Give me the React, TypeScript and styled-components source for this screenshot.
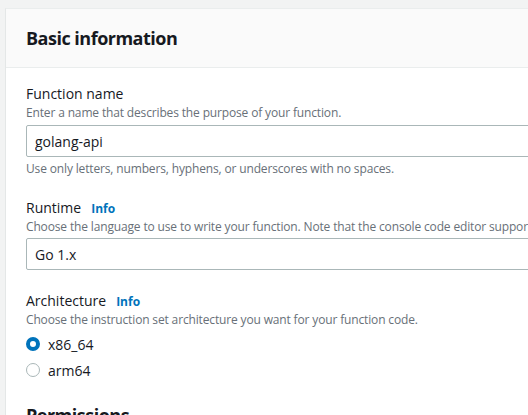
import React from 'react';
import styled, { createGlobalStyle } from 'styled-components';

const GlobalStyle = createGlobalStyle`
  html, body {
    margin: 0;
    padding: 0;
    background: #f2f3f3;
    overflow: hidden;
  }
  body {
    font-family: "Open Sans", "Noto Sans", sans-serif;
    color: #16191f;
  }
`;

const App = () => {
  return (
    <>
      <GlobalStyle />
      <Page>
        <Card>
          <CardHeader>
            <CardTitle>Basic information</CardTitle>
          </CardHeader>
          <CardBody>
            <Field>
              <Label>Function name</Label>
              <Description>Enter a name that describes the purpose of your function.</Description>
              <Input defaultValue="golang-api" />
              <Constraint>Use only letters, numbers, hyphens, or underscores with no spaces.</Constraint>
            </Field>
            <Field>
              <Label>
                Runtime <InfoLink>Info</InfoLink>
              </Label>
              <Description>
                Choose the language to use to write your function. Note that the console code editor supports only Node.js, Python, and Ruby.
              </Description>
              <Select>Go 1.x</Select>
            </Field>
            <Field>
              <Label>
                Architecture <InfoLink>Info</InfoLink>
              </Label>
              <Description>Choose the instruction set architecture you want for your function code.</Description>
              <RadioGroup>
                <RadioRow>
                  <Radio checked />
                  <RadioLabel>x86_64</RadioLabel>
                </RadioRow>
                <RadioRow>
                  <Radio />
                  <RadioLabel>arm64</RadioLabel>
                </RadioRow>
              </RadioGroup>
            </Field>
            <SectionTitle>Permissions</SectionTitle>
          </CardBody>
        </Card>
      </Page>
    </>
  );
};

export default App;

const Page = styled.div`
  padding: 8px 0 0 5px;
`;

const Card = styled.div`
  width: 640px;
  background: #ffffff;
  border-left: 1px solid #e4e7e7;
  border-top: 1px solid #eaeded;
`;

const CardHeader = styled.div`
  height: 58px;
  display: flex;
  align-items: center;
  padding: 0 20px;
  background: #fafafa;
  border-bottom: 1px solid #eaeded;
`;

const CardTitle = styled.h2`
  margin: 0;
  font-size: 18px;
  font-weight: 700;
  line-height: 22px;
  letter-spacing: -0.5px;
`;

const CardBody = styled.div`
  padding: 15px 20px 0;
`;

const Field = styled.div`
  display: flex;
  flex-direction: column;
  margin-bottom: 20px;
`;

const Label = styled.div`
  height: 22px;
  font-size: 14px;
  line-height: 22px;
  display: flex;
  align-items: baseline;
  gap: 10px;
`;

const InfoLink = styled.span`
  font-size: 12px;
  font-weight: 700;
  color: #0073bb;
`;

const Description = styled.div`
  font-size: 12px;
  line-height: 16px;
  color: #687078;
  white-space: nowrap;
  letter-spacing: -0.15px;
`;

const Input = styled.input`
  box-sizing: border-box;
  height: 32px;
  margin-top: 4px;
  padding: 0 8px;
  border: 1px solid #aab7b8;
  border-radius: 2px;
  font-family: inherit;
  font-size: 14px;
  color: #16191f;
  outline: none;
`;

const Select = styled.div`
  box-sizing: border-box;
  height: 32px;
  margin-top: 3px;
  padding: 0 8px;
  display: flex;
  align-items: center;
  border: 1px solid #aab7b8;
  border-radius: 2px;
  font-size: 14px;
`;

const Constraint = styled.div`
  font-size: 12px;
  line-height: 16px;
  margin-top: 4px;
  color: #687078;
  letter-spacing: -0.15px;
`;

const RadioGroup = styled.div`
  display: flex;
  flex-direction: column;
  gap: 6px;
  margin-top: 6px;
`;

const RadioRow = styled.label`
  display: flex;
  align-items: center;
  gap: 8px;
  height: 20px;
`;

const Radio = styled.span<{ checked?: boolean }>`
  box-sizing: border-box;
  width: 14px;
  height: 14px;
  border-radius: 50%;
  background: #ffffff;
  border: ${(p) => (p.checked ? '4px solid #0073bb' : '1px solid #aab7b8')};
`;

const RadioLabel = styled.span`
  font-size: 14px;
`;

const SectionTitle = styled.h2`
  margin: 24px 0 0;
  font-size: 18px;
  font-weight: 700;
  line-height: 22px;
  letter-spacing: -0.5px;
`;
